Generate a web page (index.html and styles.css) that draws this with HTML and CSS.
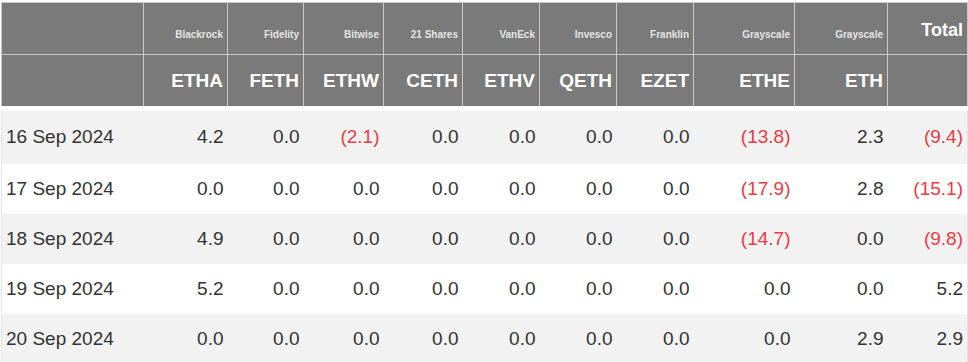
FILE: index.html
```html
<!DOCTYPE html>
<html lang="en">
<head>
    <meta charset="UTF-8">
    <meta name="viewport" content="width=device-width, initial-scale=1.0">
    <title>ETH ETF Flows</title>
    <link rel="stylesheet" href="styles.css">
</head>
<body>
    <table class="flows">
        <colgroup>
            <col style="width: 142px">
            <col style="width: 84px">
            <col style="width: 76px">
            <col style="width: 80px">
            <col style="width: 79px">
            <col style="width: 77px">
            <col style="width: 77px">
            <col style="width: 77px">
            <col style="width: 101px">
            <col style="width: 93px">
            <col style="width: 80px">
        </colgroup>
        <thead>
            <tr class="issuers">
                <th></th>
                <th>Blackrock</th>
                <th>Fidelity</th>
                <th>Bitwise</th>
                <th>21 Shares</th>
                <th>VanEck</th>
                <th>Invesco</th>
                <th>Franklin</th>
                <th>Grayscale</th>
                <th>Grayscale</th>
                <th class="total">Total</th>
            </tr>
            <tr class="tickers">
                <th></th>
                <th>ETHA</th>
                <th>FETH</th>
                <th>ETHW</th>
                <th>CETH</th>
                <th>ETHV</th>
                <th>QETH</th>
                <th>EZET</th>
                <th>ETHE</th>
                <th>ETH</th>
                <th></th>
            </tr>
        </thead>
        <tbody>
            <tr>
                <td class="date">16 Sep 2024</td>
                <td>4.2</td><td>0.0</td><td class="neg">(2.1)</td><td>0.0</td><td>0.0</td>
                <td>0.0</td><td>0.0</td><td class="neg">(13.8)</td><td>2.3</td><td class="neg">(9.4)</td>
            </tr>
            <tr>
                <td class="date">17 Sep 2024</td>
                <td>0.0</td><td>0.0</td><td>0.0</td><td>0.0</td><td>0.0</td>
                <td>0.0</td><td>0.0</td><td class="neg">(17.9)</td><td>2.8</td><td class="neg">(15.1)</td>
            </tr>
            <tr>
                <td class="date">18 Sep 2024</td>
                <td>4.9</td><td>0.0</td><td>0.0</td><td>0.0</td><td>0.0</td>
                <td>0.0</td><td>0.0</td><td class="neg">(14.7)</td><td>0.0</td><td class="neg">(9.8)</td>
            </tr>
            <tr>
                <td class="date">19 Sep 2024</td>
                <td>5.2</td><td>0.0</td><td>0.0</td><td>0.0</td><td>0.0</td>
                <td>0.0</td><td>0.0</td><td>0.0</td><td>0.0</td><td>5.2</td>
            </tr>
            <tr>
                <td class="date">20 Sep 2024</td>
                <td>0.0</td><td>0.0</td><td>0.0</td><td>0.0</td><td>0.0</td>
                <td>0.0</td><td>0.0</td><td>0.0</td><td>2.9</td><td>2.9</td>
            </tr>
        </tbody>
    </table>
</body>
</html>
```

FILE: styles.css
```css
* {
    margin: 0;
    padding: 0;
    box-sizing: border-box;
}
body {
    font-family: "Liberation Sans", Arial, sans-serif;
    background: #fff;
    padding: 2px 0 0 1px;
}
.flows {
    width: 966px;
    table-layout: fixed;
    border-collapse: collapse;
}
.flows th {
    background: #7a7a7a;
    border: 1px solid #c9c9c9;
    text-align: right;
    padding: 0 4px;
    color: #fff;
}
.issuers th {
    height: 52px;
    vertical-align: bottom;
    padding-bottom: 14px;
    font-size: 10px;
    color: #e4e4e4;
}
.issuers th.total {
    font-size: 18px;
    color: #fff;
    padding-bottom: 13px;
}
.tickers th {
    height: 54px;
    font-size: 19px;
    vertical-align: middle;
}
.flows td {
    height: 50px;
    font-size: 19px;
    color: #333;
    text-align: right;
    padding: 0 4px;
    vertical-align: middle;
}
.flows td:first-child {
    border-left: 1px solid #e2e2e2;
}
.flows td:last-child {
    border-right: 1px solid #e2e2e2;
}
.flows tbody tr:first-child td {
    border-top: 5px solid #fff;
    height: 55px;
}
.flows tbody tr:nth-child(odd) td {
    background: #f2f2f2;
}
.flows td.date {
    text-align: left;
}
.flows td.neg {
    color: #ee3a42;
}
```
